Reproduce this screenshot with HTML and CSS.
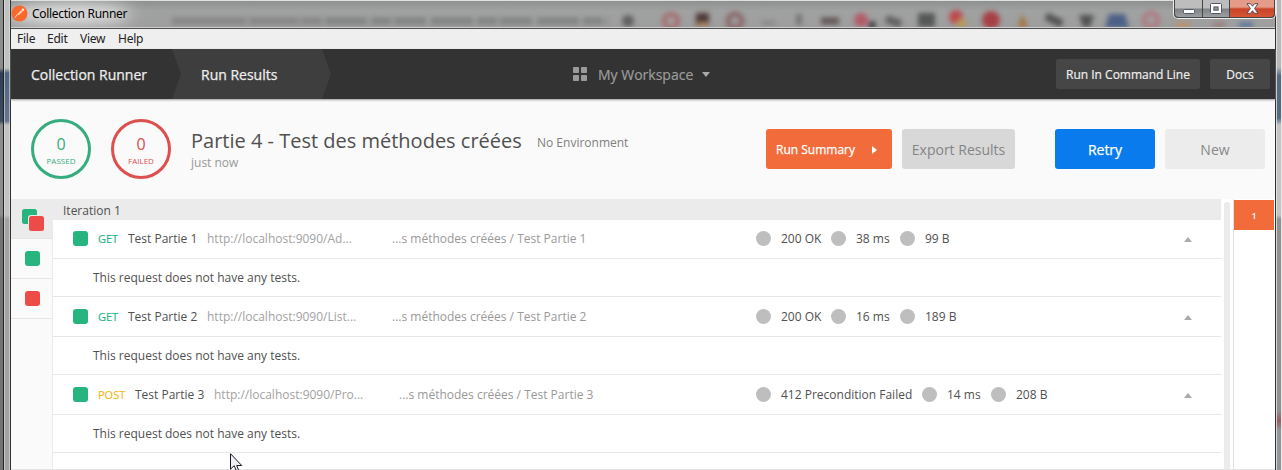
FILE: index.html
```html
<!DOCTYPE html>
<html lang="fr">
<head>
<meta charset="utf-8">
<title>Collection Runner</title>
<link rel="stylesheet" href="styles.css">
</head>
<body>
<div class="frame">
  <div class="edge edge-left"></div>
  <div class="window">
    <div class="titlebar">
      <svg class="glass" width="1271" height="26" viewBox="11 1 1271 26">
        <defs>
          <filter id="soft" filterUnits="userSpaceOnUse" x="0" y="-10" width="1290" height="50"><feGaussianBlur stdDeviation="2.5"/></filter>
          <filter id="glow" x="-50%" y="-100%" width="200%" height="300%"><feGaussianBlur stdDeviation="8"/></filter>
        </defs>
        <ellipse cx="70" cy="14" rx="62" ry="10" fill="#e4e4e4" filter="url(#glow)"/>
        <g filter="url(#soft)" opacity=".85">
          <path d="M172 21H322" stroke="#828282" stroke-width="7" stroke-dasharray="74 3 50 2"/>
          <path d="M325 21H608" stroke="#7d7e7e" stroke-width="7" stroke-dasharray="42 4 20 3 32 5"/>
          <circle cx="628" cy="21" r="6" fill="#555"/>
          <circle cx="671" cy="21" r="7" fill="none" stroke="#a85b5e" stroke-width="4"/>
          <rect x="696" y="13" width="13" height="13" fill="#402525"/>
          <rect x="698" y="23" width="10" height="4" fill="#b08455"/>
          <circle cx="735" cy="21" r="7" fill="none" stroke="#875c5f" stroke-width="5"/>
          <path d="M762 23h13" stroke="#858585" stroke-width="5"/>
          <path d="M799 14v11" stroke="#666" stroke-width="5"/>
          <path d="M821 21h18" stroke="#59484a" stroke-width="7"/>
          <circle cx="861" cy="20" r="7" fill="#b64f60"/><circle cx="872" cy="25" r="4" fill="#333"/>
          <path d="M886 19l15 5" stroke="#555" stroke-width="8"/>
          <rect x="918" y="13" width="17" height="14" fill="#494b4b"/>
          <circle cx="956" cy="17" r="7" fill="#c53b3e"/><circle cx="962" cy="24" r="5" fill="#b89a51"/>
          <circle cx="991" cy="20" r="9" fill="#a92f35"/>
          <path d="M1018 27l4-13 6 13z" fill="#a76b25"/>
          <path d="M1046 16l16 8" stroke="#444" stroke-width="8"/>
          <path d="M1079 15h15l-4 12h-7z" fill="#444"/>
          <path d="M1105 28l4-14h16l4 14z" fill="#3c5784"/>
          <circle cx="1151" cy="20" r="7" fill="none" stroke="#b56c77" stroke-width="4"/>
          <path d="M1176 25h14" stroke="#c58e5d" stroke-width="5"/>
          <path d="M1213 25h12" stroke="#9a7775" stroke-width="5"/>
          <path d="M1239 25h14" stroke="#496a9b" stroke-width="5"/>
        </g>
      </svg>
      <svg class="app-icon" width="17" height="17" viewBox="0 0 17 17"><circle cx="8.5" cy="8.5" r="8" fill="#f8682d"/><path d="M3.800 12.800l2.600-3.300 3.600-3.700" stroke="#ffe1c9" stroke-width="1" fill="none"/><path d="M6.500 9.600l3.800-4.200 1.400 1.100-4.100 3.700z" fill="#ffd4b7"/><circle cx="12" cy="4.800" r="1.300" fill="#fff0df"/></svg>
      <span class="window-title">Collection Runner</span>
      <div class="controls">
        <span class="control min"><svg width="12" height="5"><rect x=".5" y=".5" width="11" height="4" rx="1" fill="#fff" stroke="#555866"/></svg></span>
        <span class="control max"><svg width="12" height="11"><rect x="2" y="2" width="8" height="7" fill="none" stroke="#fff" stroke-width="3"/><rect x=".5" y=".5" width="11" height="10" rx="1" fill="none" stroke="#555866"/><rect x="4" y="4" width="4" height="3" fill="#999" stroke="#555866"/></svg></span>
        <span class="control close"><svg width="13" height="11" viewBox="0 0 13 11"><path d="M1 .7h3.500l2 2.500 2-2.500H12L8.600 5.500 12 10.300H8.500l-2-2.500-2 2.500H1l3.400-4.800z" fill="#fff" stroke="#5b4b58"/></svg></span>
      </div>
    </div>
    <div class="menubar"><span class="m-file">File</span><span class="m-edit">Edit</span><span class="m-view">View</span><span>Help</span></div>
    <nav class="nav">
      <div class="crumb crumb-first">Collection Runner</div>
      <div class="crumb crumb-active">Run Results</div>
      <div class="workspace">
        <svg width="14" height="14" fill="#9b9b9b"><rect width="6" height="6" rx=".8"/><rect x="8" width="6" height="6" rx=".8"/><rect y="8" width="6" height="6" rx=".8"/><rect x="8" y="8" width="6" height="6" rx=".8"/></svg>
        <span class="workspace-name">My Workspace</span>
        <svg width="8" height="5"><path d="M0 0h8L4 5z" fill="#aaa"/></svg>
      </div>
      <div class="nav-actions"><span class="dark-btn cli">Run In Command Line</span><span class="dark-btn docs">Docs</span></div>
    </nav>
    <header class="summary">
      <div class="ring passed"><b>0</b><small>PASSED</small></div>
      <div class="ring failed"><b>0</b><small>FAILED</small></div>
      <div class="heading"><h1>Partie 4 - Test des méthodes créées</h1><p>just now</p></div>
      <span class="environment">No Environment</span>
      <div class="actions">
        <span class="btn run"><span>Run Summary</span><svg width="5" height="8"><path d="M0 0l5 4-5 4z" fill="#fff"/></svg></span>
        <span class="btn export">Export Results</span>
        <span class="btn retry">Retry</span>
        <span class="btn new">New</span>
      </div>
    </header>
    <main class="content">
      <aside class="filters">
        <div class="filter all"><svg width="22" height="22"><rect width="15" height="15" rx="2.500" fill="#26b47f"/><rect x="6" y="6" width="17" height="17" rx="3" fill="#ebebeb"/><rect x="7" y="7" width="15" height="15" rx="2.500" fill="#ed4b48"/></svg></div>
        <div class="filter"><i class="square"></i></div>
        <div class="filter"><i class="square red"></i></div>
      </aside>
      <section class="results">
        <div class="iteration">Iteration 1</div>
        <div class="request first">
          <div class="name"><i class="square"></i><span class="method get">GET</span><span class="title">Test Partie 1</span><span class="url">http://localhost:9090/Ad...</span><span class="path">...s méthodes créées / Test Partie 1</span></div>
          <div class="stats"><i></i><span class="code">200 OK</span><i></i><span class="time">38 ms</span><i></i><span>99 B</span></div>
          <svg class="collapse" width="8" height="5"><path d="M0 5h8L4 0z" fill="#aaa"/></svg>
        </div>
        <div class="message">This request does not have any tests.</div>
        <div class="request">
          <div class="name"><i class="square"></i><span class="method get">GET</span><span class="title">Test Partie 2</span><span class="url">http://localhost:9090/List...</span><span class="path">...s méthodes créées / Test Partie 2</span></div>
          <div class="stats"><i></i><span class="code">200 OK</span><i></i><span class="time">16 ms</span><i></i><span>189 B</span></div>
          <svg class="collapse" width="8" height="5"><path d="M0 5h8L4 0z" fill="#aaa"/></svg>
        </div>
        <div class="message">This request does not have any tests.</div>
        <div class="request">
          <div class="name"><i class="square"></i><span class="method post">POST</span><span class="title">Test Partie 3</span><span class="url">http://localhost:9090/Pro...</span><span class="path">...s méthodes créées / Test Partie 3</span></div>
          <div class="stats"><i></i><span class="code long">412 Precondition Failed</span><i></i><span class="time">14 ms</span><i></i><span>208 B</span></div>
          <svg class="collapse" width="8" height="5"><path d="M0 5h8L4 0z" fill="#aaa"/></svg>
        </div>
        <div class="message">This request does not have any tests.</div>
      </section>
      <div class="scroll"><div class="thumb"></div></div>
      <aside class="pages"><span>1</span></aside>
    </main>
  </div>
  <div class="edge edge-right"></div>
</div>
<svg class="cursor" width="13" height="20" viewBox="0 0 13 20"><path d="M.5.700v15.500l3.700-3.500 2.500 6h2.500l-2.500-6.200h5z" fill="#f1f1f5" stroke="#17172a"/></svg>
</body>
</html>
```
FILE: styles.css
```css
* { box-sizing: border-box; }
body { margin: 0; width: 1282px; height: 470px; overflow: hidden; font-family: "Open Sans", sans-serif; font-size: 12px; color: #505050; }
svg { display: block; flex: none; }
.frame { display: grid; grid-template-columns: 11px 1264px 7px; height: 470px; background: linear-gradient(#a8aaa9, #999 28px); }
.window { display: grid; grid-template-rows: 29px 20px 50px 100px 271px; min-width: 0; }
.edge-left { background: linear-gradient(90deg, transparent 0 3px, #222 3px 4px, rgba(225, 225, 225, .6) 4px 5px, transparent 5px 9px, rgba(225, 225, 225, .6) 9px 10px, #303030 10px), linear-gradient(90deg, rgba(0, 0, 0, .25) 0 3px, rgba(255, 255, 255, .1) 4px), linear-gradient(#b8bcb9 0 68px, #3b5470 73px, #536781 121px, #bbb 125px 215px, #999 219px); }
.edge-right { background: linear-gradient(90deg, #303030 0 1px, rgba(235, 235, 235, .8) 1px 2px, transparent 2px 6px, #e6e6e6 6px), linear-gradient(#b8b8b8 0 67px, #526b83 76px, #526b83 118px, #c4c4c4 125px 215px, #909291 219px 410px, #985b61 421px, #92959a 430px); }
.titlebar { position: relative; display: flex; align-items: center; border-top: 1px solid #dce1df; border-bottom: 1px solid #4d4d4d; box-shadow: inset 0 -1px #cfcfcf; background: linear-gradient(#8f9190, #a0a2a1 10px, #9d9d9d); }
.glass { position: absolute; left: 0; top: 0; }
.app-icon { position: relative; top: -1px; }
.window-title { position: relative; top: -1px; margin-left: 4px; color: #000; font: 12px "Noto Sans", sans-serif; letter-spacing: -.3px; }
.controls { position: absolute; right: -1px; top: -1px; width: 103px; height: 19px; display: flex; border: 1px solid #eee; border-top: 0; border-radius: 0 0 5px 5px; background: #454545; padding: 0 1px 1px; gap: 1px; overflow: hidden; }
.control { display: flex; align-items: center; justify-content: center; background: linear-gradient(#bdbdbd 0 8px, #7f8184 9px, #9ba0a3); }
.min { width: 27px; border-radius: 0 0 0 4px; padding-top: 5px; }
.max { width: 26px; }
.close { flex: 1; border-radius: 0 0 4px; background: linear-gradient(#e49b87 0 7px, #c94328 9px, #d65635); }
.menubar { display: flex; padding-left: 6px; background: #f0eff0; color: #222; font: 12px/20px "Noto Sans", sans-serif; letter-spacing: -.25px; }
.m-file { width: 30px; } .m-edit { width: 33px; } .m-view { width: 38px; }
.nav { position: relative; display: flex; background: #333; color: #eee; z-index: 1; box-shadow: 0 1px 2px #999; }
.crumb { height: 50px; padding-left: 20px; font-size: 14px; line-height: 51px; -webkit-text-stroke: .25px; white-space: nowrap; }
.crumb-first { width: 161px; }
.crumb-active { width: 159px; padding-left: 29px; background: #3e3e3e; clip-path: polygon(0 0, 150px 0, 100% 50%, 150px 100%, 0 100%, 9px 50%); }
.workspace { width: 140px; margin-left: 231px; display: flex; align-items: center; color: #9c9c9c; font-size: 14px; padding-left: 11px; }
.workspace-name { width: 96px; margin: 0 9px 0 11px; white-space: nowrap; -webkit-text-stroke: .2px; }
.nav-actions { margin: 10px 5px 0 auto; display: flex; gap: 10px; }
.dark-btn { height: 30px; border-radius: 2px; background: #464646; text-align: center; line-height: 31px; -webkit-text-stroke: .2px; }
.cli { width: 144px; } .docs { width: 60px; }
.summary { display: flex; align-items: flex-start; padding: 20px 10px 0 20px; background: #fafafa; }
.ring { width: 60px; height: 60px; margin-right: 20px; border: 3px solid; border-radius: 50%; display: flex; flex-direction: column; align-items: center; padding-top: 13px; }
.ring b { font-size: 16px; line-height: 19px; font-weight: 400; }
.ring small { font-size: 8px; line-height: 14px; }
.passed { color: #36ad7e; } .failed { color: #dc504e; }
.heading { width: 331px; }
.heading h1 { margin: 8px 0 0; font-size: 20px; font-weight: 400; line-height: 27px; white-space: nowrap; }
.heading p { margin: 1px 0 0; line-height: 15px; color: #999; }
.environment { margin: 15px 0 0 15px; line-height: 18px; color: #808080; white-space: nowrap; }
.actions { margin: 10px 0 0 auto; display: flex; }
.btn { height: 40px; border-radius: 3px; display: flex; align-items: center; justify-content: center; font-size: 14px; padding-top: 1px; }
.run { width: 126px; margin-right: 10px; justify-content: flex-start; gap: 17px; padding-left: 10px; background: #f26b3a; color: #fff; font-size: 12px; -webkit-text-stroke: .25px; }
.export { width: 113px; margin-right: 40px; background: #d8d8d8; color: #858585; }
.retry { width: 100px; margin-right: 10px; background: #097bed; color: #fff; -webkit-text-stroke: .25px; }
.new { width: 100px; background: #ececec; color: #888; }
.content { display: grid; grid-template-columns: 42px 1168px 12px 42px; background: #fff; border-bottom: 1px solid #e4e4e4; overflow: hidden; }
.filters { background: #fafafa; border-right: 1px solid #ebebeb; }
.filter { height: 40px; border-bottom: 1px solid #e6e6e6; display: flex; align-items: center; justify-content: center; padding-left: 2px; }
.filter.all { width: 42px; background: #ebebeb; padding: 3px 0 0 1px; }
.square { flex: none; width: 15px; height: 15px; border-radius: 3px; background: #26b47f; }
.square.red { background: #ed4b48; }
.results { min-width: 0; }
.iteration { height: 21px; padding-left: 10px; line-height: 23px; background: #ebebeb; }
.request { height: 40px; border-bottom: 1px solid #e6e6e6; display: grid; grid-template-columns: 683px 1fr 8px; align-items: center; padding: 0 29px 0 20px; }
.request.first { height: 39px; padding-bottom: 1px; }
.name, .stats { display: flex; align-items: center; white-space: nowrap; }
.method { margin-left: 10px; font-size: 11px; -webkit-text-stroke: .15px; }
.get { width: 21px; color: #26b47f; }
.post { width: 28px; color: #f4b71b; }
.title { width: 69px; margin-left: 9px; }
.url { width: 185px; margin-left: 10px; color: #a2a2a2; }
.path { color: #999; }
.stats i { width: 15px; height: 15px; border-radius: 50%; background: #bebebe; margin-right: 10px; }
.code { width: 50px; } .code.long { width: 141px; } .time { width: 44px; }
.collapse { margin-top: 2px; }
.message { height: 38px; border-bottom: 1px solid #e6e6e6; padding-left: 40px; line-height: 38px; }
.scroll { padding: 3px 0 0 3px; } .thumb { width: 6px; height: 268px; border-radius: 3px 3px 0 0; background: #ebebeb; }
.pages { border-left: 1px solid #e2e2e2; padding-top: 1px; }
.pages span { display: block; width: 40px; height: 30px; background: #f26b3a; color: #fff; font-size: 9px; font-weight: 600; line-height: 32px; text-align: center; }
.cursor { position: absolute; left: 230px; top: 453px; }
```
